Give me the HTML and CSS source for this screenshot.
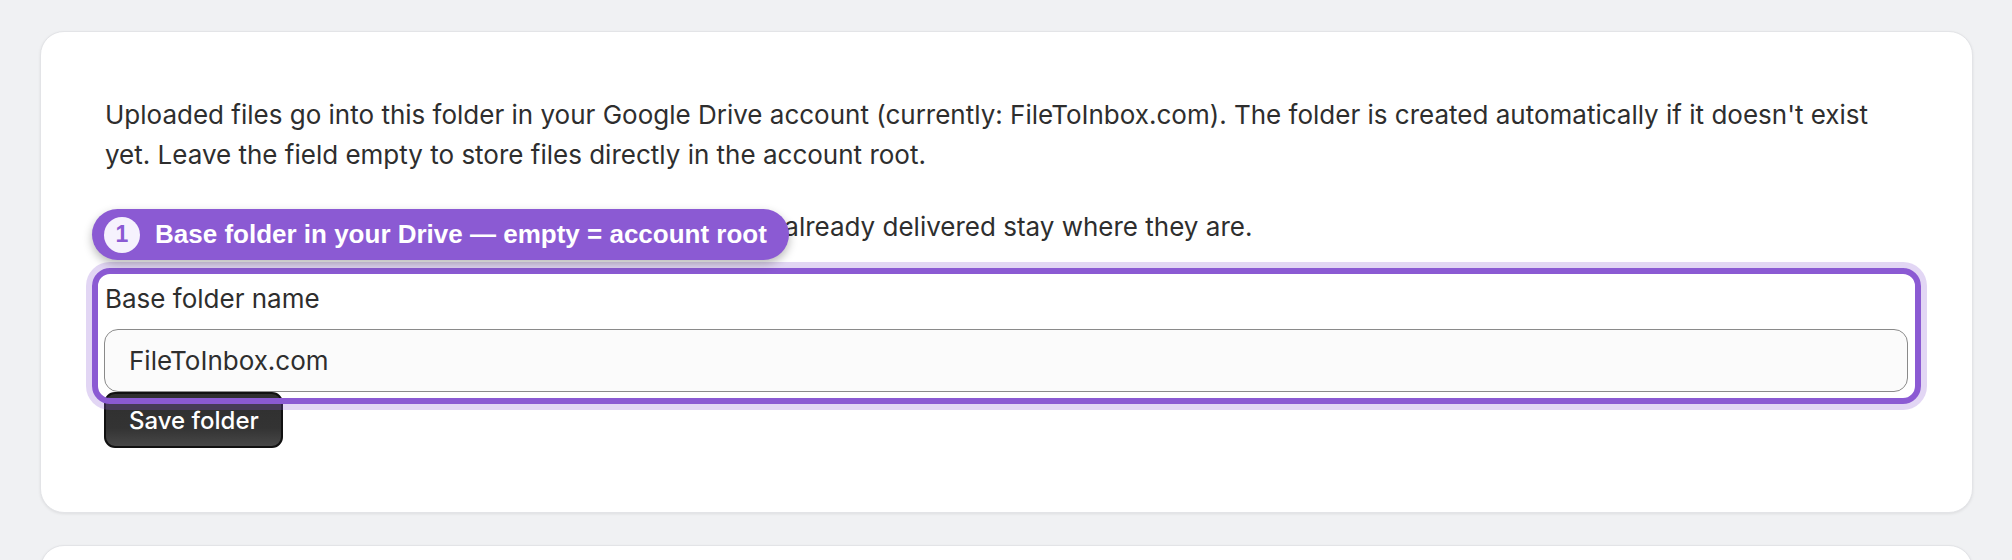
FILE: index.html
```html
<!DOCTYPE html>
<html lang="en">
<head>
<meta charset="utf-8">
<title>Drive folder</title>
<link rel="stylesheet" href="styles.css">
</head>
<body>
<main class="page">
  <section class="card">
    <p class="text">Uploaded files go into this folder in your Google Drive account (currently: FileToInbox.com). The folder is created automatically if it doesn't exist yet. Leave the field empty to store files directly in the account root.</p>
    <p class="text">Changing the root folder just affects new uploads; files already delivered stay where they are.</p>
    <form class="form">
      <div class="field">
        <label class="label" for="folder">Base folder name</label>
        <input class="input" id="folder" type="text" value="FileToInbox.com">
        <div class="highlight"></div>
        <div class="badge"><span class="badge-num">1</span><span class="badge-text">Base folder in your Drive — empty = account root</span></div>
      </div>
      <button class="btn" type="button">Save folder</button>
    </form>
  </section>
  <section class="card card-next"></section>
</main>
</body>
</html>
```

FILE: styles.css
```css
html, body {
  margin: 0;
  padding: 0;
  background: #f0f1f3;
}
body {
  font-family: Inter, "Noto Sans", sans-serif;
  color: #2e2e2e;
}
.page {
  padding: 31px 39px 0 40px;
  display: flex;
  flex-direction: column;
  gap: 32px;
}
.card {
  background: #fff;
  border: 1px solid #e3e4e7;
  border-radius: 24px;
  box-shadow: 0 1px 3px rgba(0, 0, 0, 0.08);
  padding: 63px 64px 64px 64px;
  position: relative;
}
.card-next {
  height: 200px;
  padding: 0;
}
.text {
  margin: 0 0 32px 0;
  font-size: 26px;
  line-height: 40px;
}
.form {
  display: flex;
  flex-direction: column;
  align-items: flex-start;
}
.field {
  position: relative;
  align-self: stretch;
  display: flex;
  flex-direction: column;
  gap: 10px;
}
.label {
  font-size: 26px;
  line-height: 40px;
}
.input {
  box-sizing: border-box;
  height: 63px;
  margin: 0 0 0 -1px;
  padding: 0 24px;
  font-family: Inter, "Noto Sans", sans-serif;
  font-size: 26px;
  color: #2e2e2e;
  background: #fbfbfb;
  border: 1px solid #8a8a8a;
  border-radius: 14px;
  outline: none;
}
.highlight {
  position: absolute;
  top: -11px;
  left: -13px;
  right: -13px;
  bottom: -12px;
  border: 6px solid #8b5ad3;
  border-radius: 18px;
  box-shadow: 0 0 0 6px rgba(139, 90, 211, 0.25);
  pointer-events: none;
}
.badge {
  position: absolute;
  top: -70px;
  left: -13px;
  height: 51px;
  box-sizing: border-box;
  display: flex;
  align-items: center;
  gap: 15px;
  padding: 0 22px 0 12px;
  background: #8b5ad3;
  border-radius: 26px;
  box-shadow: 0 4px 10px rgba(0, 0, 0, 0.28);
  color: #fff;
  font-family: "Liberation Sans", Arial, sans-serif;
  font-weight: 700;
  white-space: nowrap;
}
.badge-num {
  width: 36px;
  height: 36px;
  border-radius: 50%;
  background: #f6f2fd;
  color: #8b5ad3;
  font-size: 23px;
  display: flex;
  align-items: center;
  justify-content: center;
}
.badge-text {
  font-size: 26px;
}
.btn {
  margin: 0 0 0 -1px;
  box-sizing: border-box;
  height: 56px;
  width: 179px;
  padding: 0 0 0 23px;
  text-align: left;
  font-family: Inter, "Noto Sans", sans-serif;
  font-size: 24px;
  font-weight: 500;
  color: #fff;
  background: linear-gradient(#2f2f2f, #333 65%, #474747);
  border: 2px solid #111;
  border-radius: 11px;
}
```
